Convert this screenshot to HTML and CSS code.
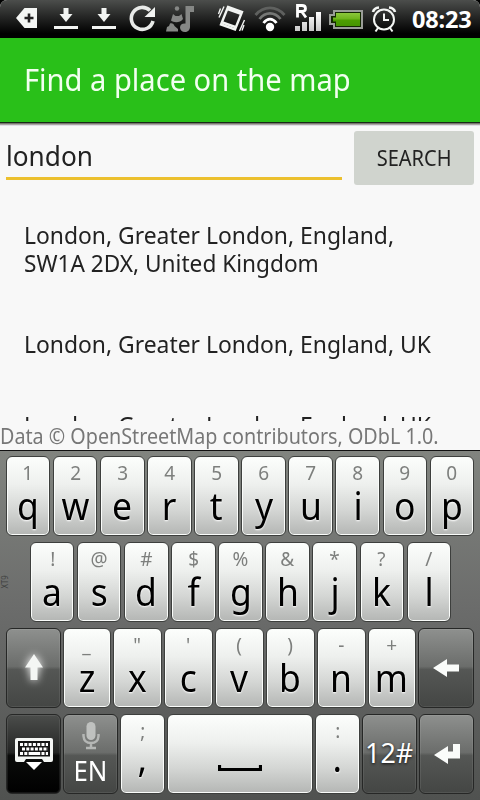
FILE: index.html
```
<!DOCTYPE html>
<html lang="en">
<head>
<meta charset="utf-8">
<title>Find a place on the map</title>
<link rel="stylesheet" href="styles.css">
</head>
<body>
<div class="status">
  <svg class="status-icons" width="410" height="38" viewBox="0 0 410 38">
    <defs><linearGradient id="bat" x1="0" y1="0" x2="0" y2="1"><stop offset="0" stop-color="#8cc83c"/><stop offset=".45" stop-color="#6fb41c"/><stop offset=".55" stop-color="#4d9e00"/><stop offset="1" stop-color="#459400"/></linearGradient>
    <linearGradient id="sig" x1="0" y1="0" x2="0" y2="1"><stop offset="0" stop-color="#fff"/><stop offset="1" stop-color="#c8c8c8"/></linearGradient></defs>
    <path d="M16 18 24.500 8H37V28H24.500Z" fill="#f4f6f4"/>
    <path d="M29 13.500V22.500M24.500 18H33.500" stroke="#222" stroke-width="2.600"/>
    <g fill="#f2f4f2"><path d="M63.500 8H68.500V14H72.500L66 22 59.500 14H63.500ZM54 26H78V29H54Z"/><path d="M101.500 8H106.500V14H110.500L104 22 97.500 14H101.500ZM92 26H116V29H92Z"/></g>
    <path d="M150 10.500A11 11 0 1 0 153 21" fill="none" stroke="#e8eae8" stroke-width="3.600"/>
    <path d="M155 7V17H144.500Z" fill="#f2f4f2"/>
    <g fill="#858785"><path d="M185.500 6H194V12H190V27C190 30 187.500 32 185 32 182 32 180 30 180 27.500 180 24.500 182.500 23 185.500 23.500Z"/><circle cx="177" cy="8.500" r="2.200"/><path d="M173 14 175.500 16H179L181.500 14 183 19C180 23 174 23 171 20.500ZM166 31.500 167 27 169 26 170 23.500C172 22.500 174 24 174.500 26L178 29V31.500Z"/></g>
    <g fill="none" stroke="#f2f4f2"><path d="M228 7 242 12 235 29.500 221 24.500Z" stroke-width="2.400"/><path d="M227.500 9 241 13.800M222.500 22.500 236 27.300" stroke-width="2.500"/><path d="M224 6.500 219 17.500M220.500 8.500 218.500 14M244.500 20 239.500 31M244 25 242 30.500" stroke-width="1.400"/></g>
    <g fill="none" stroke-width="2.800"><path d="M255.500 15C263.500 5.500 276.500 5.500 284.500 15" stroke="#5f615f"/><path d="M259.500 19C265.500 11.500 274.500 11.500 280.500 19" stroke="#757775"/><path d="M263.500 23C267.500 17.700 272.500 17.700 276.500 23" stroke="#fff"/></g><circle cx="270" cy="27" r="4.200" fill="#fff"/>
    <path d="M297.500 17.500V5.500H302Q305.500 5.500 305.500 8.500T302 11.500H298M302 12 306 17.500" fill="none" stroke="#fff" stroke-width="2.800"/>
    <path d="M295 26H300V31H295ZM302 22H307V31H302ZM309 17H314V31H309ZM316 12H321V31H316Z" fill="url(#sig)"/>
    <path d="M334 11H362V28H334V24H330V15H334Z" fill="#132800" stroke="#9a9d98" stroke-width="2"/><path d="M336 13H360V26H336V21.500H333V17.500H336Z" fill="url(#bat)"/>
    <g fill="none" stroke="#f4f6f4" stroke-width="2"><circle cx="384" cy="19.500" r="10"/><path d="M384 13.500V20H389M378 28 375.500 31.500M390 28 392.500 31.500"/><path d="M373 12Q374 8 379 7.500M395 12Q394 8 389 7.500" stroke-width="2.600"/></g>
  </svg>
  <span class="clock">08:23</span>
</div>
<header class="title-bar"><h1><span class="fit title-text">Find a place on the map</span></h1></header>
<main class="content">
  <div class="search">
    <div class="field"><span class="fit field-text">london</span></div>
    <div class="button"><span class="fit button-text">SEARCH</span></div>
  </div>
  <div class="results">
    <div class="result"><span class="fit">London, Greater London, England,<br><span class="fit second">SW1A 2DX, United Kingdom</span></span></div>
    <div class="result"><span class="fit">London, Greater London, England, UK</span></div>
    <div class="result"><span class="fit">London, Greater London, England, UK</span></div>
  </div>
  <footer class="credit"><span class="fit credit-text">Data © OpenStreetMap contributors, ODbL 1.0.</span></footer>
</main>
<div class="keyboard">
  <div class="row">
    <div class="key"><small>1</small><b>q</b></div><div class="key"><small>2</small><b>w</b></div><div class="key"><small>3</small><b>e</b></div><div class="key"><small>4</small><b>r</b></div><div class="key"><small>5</small><b>t</b></div><div class="key"><small>6</small><b>y</b></div><div class="key"><small>7</small><b>u</b></div><div class="key"><small>8</small><b>i</b></div><div class="key"><small>9</small><b>o</b></div><div class="key"><small>0</small><b>p</b></div>
  </div>
  <div class="row row-home">
    <span class="xt9">XT9</span>
    <div class="key"><small>!</small><b>a</b></div><div class="key"><small>@</small><b>s</b></div><div class="key"><small>#</small><b>d</b></div><div class="key"><small>$</small><b>f</b></div><div class="key"><small>%</small><b>g</b></div><div class="key"><small>&amp;</small><b>h</b></div><div class="key"><small>*</small><b>j</b></div><div class="key"><small>?</small><b>k</b></div><div class="key"><small>/</small><b>l</b></div>
  </div>
  <div class="row row-lower">
    <div class="key gray"><svg class="glow" width="30" height="36" viewBox="0 0 30 36"><path d="M15 4 24 17.500H18.500V30H11.500V17.500H6Z" fill="#f4f6f4"/></svg></div>
    <div class="key"><small>_</small><b>z</b></div><div class="key"><small>"</small><b>x</b></div><div class="key"><small>'</small><b>c</b></div><div class="key"><small>(</small><b>v</b></div><div class="key"><small>)</small><b>b</b></div><div class="key"><small>-</small><b>n</b></div><div class="key"><small>+</small><b>m</b></div>
    <div class="key gray"><svg width="26" height="18" viewBox="0 0 26 18"><path d="M0 9 14 0V5.500H26V12.500H14V18Z" fill="#fafcfa"/></svg></div>
  </div>
  <div class="row row-bottom">
    <div class="key black"><svg width="38" height="32" viewBox="0 0 38 32"><path d="M2 0H36Q38 0 38 2V22Q38 24 36 24H29L27 21H11L9 24H2Q0 24 0 22V2Q0 0 2 0Z" fill="#f4f6f4"/><path d="M3 3H35V18.500H3Z" fill="#151515"/><path d="M5 6.500H33M7 11H33M5 15.500H33" stroke="#fff" stroke-width="3" stroke-dasharray="3 1.300"/><path d="M14 15.500H24" stroke="#fff" stroke-width="3"/><path d="M11 24H27L19 32Z" fill="#fff"/></svg></div>
    <div class="key gray lang"><svg width="18" height="28" viewBox="0 0 18 28"><rect x="4.500" y="0" width="9" height="18" rx="4.500" fill="#bfc1bf"/><path d="M1.500 12V14Q2 21 9 21T16.500 14V12M9 21V26M4 26H14" fill="none" stroke="#b5b7b5" stroke-width="2.500"/></svg><span>EN</span></div>
    <div class="key punct"><small>;</small><b>,</b></div>
    <div class="key space"><svg width="44" height="7" viewBox="0 0 44 7"><path d="M1.500 0V4.500H42.500V0" fill="none" stroke="#000" stroke-width="3.200"/></svg></div>
    <div class="key punct"><small>:</small><b>.</b></div>
    <div class="key gray num"><span>12#</span></div>
    <div class="key gray"><svg width="26" height="20" viewBox="0 0 26 20"><path d="M0 11 14 2V7.500H19V0H26V14.500H14V20Z" fill="#fafcfa"/></svg></div>
  </div>
</div>
</body>
</html>
```
FILE: styles.css
```
* { box-sizing: border-box; }
body { margin: 0; width: 480px; height: 800px; overflow: hidden; background: #f8f8f8; color: #222; font-family: "Noto Sans", "Open Sans", sans-serif; }
.fit { display: inline-block; white-space: nowrap; transform-origin: left center; }
.status { height: 38px; display: flex; align-items: center; background: linear-gradient(#4c4e4c, #272827 42%, #000 88%); border-radius: 7px 7px 0 0; box-shadow: 0 0 0 8px #000; }
.status-icons { flex: none; }
.clock { color: #fff; font: bold 23.500px/38px "Noto Sans", sans-serif; margin-left: 2px; letter-spacing: -.2px; }
.title-bar { position: relative; height: 84px; background: #29c019; padding-left: 24px; box-shadow: 0 1px #182a16, 0 2px #77756f, 0 3px #aaa6a3, 0 4px #dfdde6; }
h1 { margin: 0; font-size: 30px; line-height: 84px; font-weight: 400; color: #f2fff0; }
.title-text { transform: scaleX(.97); }
.content { height: 328px; display: flex; flex-direction: column; }
.search { display: flex; gap: 12px; padding: 9px 6px 0; height: 72px; flex: none; }
.field { width: 336px; height: 49px; border-bottom: 3px solid #ecc02e; font-size: 27px; line-height: 50px; }
.field-text { transform: scaleX(.97); }
.button { flex: 1; height: 54px; border-radius: 3px; background: #d0d4ce; font-size: 22px; line-height: 53px; text-align: center; }
.button-text { transform: scaleX(.91); transform-origin: center; }
.results { height: 227px; overflow: hidden; flex: none; }
.result { padding: 26.500px 24px; font-size: 24px; line-height: 28px; }
.result > .fit { display: block; width: max-content; transform: scaleX(.953); }
.second { transform: scaleX(.99); }
.credit { height: 29px; font-size: 22px; line-height: 29px; color: #777; }
.credit-text { transform: scaleX(.897); }
.keyboard { height: 350px; border-top: 1px solid #111; background: linear-gradient(#81847f, #6b6c6b 45%, #505250); padding: 5px 6px 6px; display: flex; flex-direction: column; gap: 6px; }
.row { display: flex; gap: 2.700px; height: 80px; position: relative; }
.row-home { padding: 0 23px 0 24px; }
.row-lower { display: grid; grid-template-columns: 55px 47.500px 49px 49px 49px 49px 49px 48px 56px; gap: 2px; }
.row-bottom { display: grid; grid-template-columns: 55px 55px 45px 146px 45px 55px 55px; gap: 2px; }
.key { flex: 1; min-width: 0; height: 80px; border: 1px solid #3d3f3d; border-radius: 6px; background: linear-gradient(#fcfefc, #eef0ee 35%, #d4d6d4 68%, #b4b6b4); box-shadow: inset 0 0 0 1px #fafcfa; display: flex; flex-direction: column; align-items: center; }
.key small { font-size: 20px; line-height: 31px; color: #7d7f7d; transform: scaleX(.95); }
.key b { font-weight: 400; font-size: 39px; line-height: 34px; color: #000; transform: scaleX(.91); text-shadow: 0 1px 2px #fff; }
.key.punct b { margin-top: -6px; }
.key.gray, .key.black { border-color: #262726; justify-content: center; background: linear-gradient(#8e908e, #6b6d6b 48%, #555755 52%, #444644); box-shadow: inset 0 0 0 1px rgba(255,255,255,.08); color: #fff; }
.key.black { background: linear-gradient(#4b4d4b, #242524 48%, #0b0c0b 52%, #000); }
.glow { filter: drop-shadow(0 0 4px #fff); }
.key.lang { justify-content: flex-start; padding-top: 7px; font-size: 28px; line-height: 40px; }
.lang svg { flex: none; }
.lang span { transform: scaleX(.92); }
.num { font-size: 28px; }
.num span { transform: scaleX(.96) translateY(-2px); text-shadow: 0 1px 3px #111; }
.key.space { padding-top: 50px; }
.xt9 { position: absolute; left: -9px; top: 34px; font-size: 9px; line-height: 12px; color: #3f413f; transform: rotate(-90deg) scaleX(.85); }
```
